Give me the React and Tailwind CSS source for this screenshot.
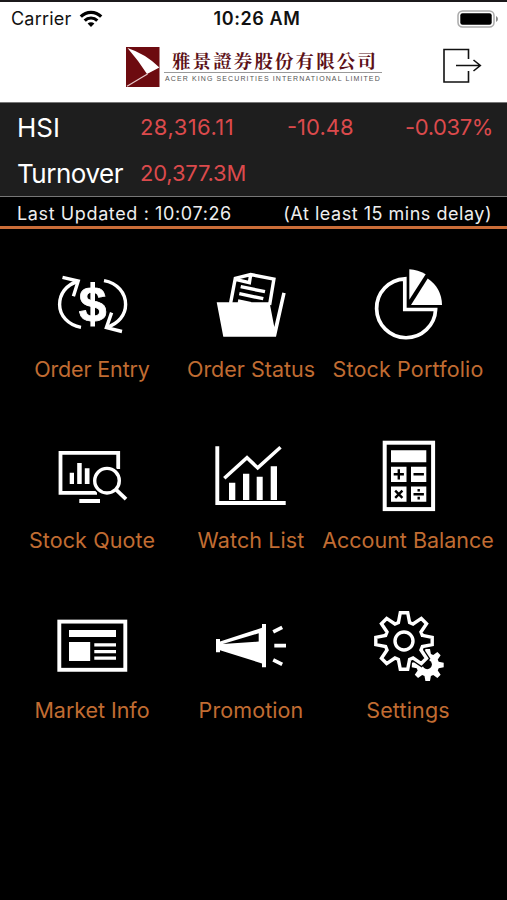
const Icon = ({ children }) => (
  <svg width="80" height="80" viewBox="0 0 80 80" fill="none" stroke="none" className="text-white">
    {children}
  </svg>
);

// closed outline of a gear with `teeth` teeth around (cx, cy)
function gearPath(cx, cy, teeth, root, tip, rootHalf, tipHalf) {
  const pts = [];
  for (let i = 0; i < teeth; i++) {
    const a = (i * 2 * Math.PI) / teeth;
    [[root, -rootHalf], [tip, -tipHalf], [tip, tipHalf], [root, rootHalf]].forEach(([r, h]) => {
      const x = cx + r * Math.cos(a) - h * Math.sin(a);
      const y = cy + r * Math.sin(a) + h * Math.cos(a);
      pts.push(`${x.toFixed(2)} ${y.toFixed(2)}`);
    });
  }
  return `M${pts.join('L')}Z`;
}

const OrderEntryIcon = () => (
  <Icon>
    <g stroke="currentColor" strokeWidth="3.4">
      <path d="M29 62.3C16 60 7.6 50.5 7.6 39.5C7.6 29 14 20 25.5 16.5" />
      <path d="M10.5 12.4L26.2 16L21.4 31.3" />
      <path d="M52 15.6C65.5 18 73.6 28 73.6 39.5C73.6 50 66.5 58.5 55 62.3" />
      <path d="M59.6 47.6L54.4 62.6L70 66.5" />
    </g>
    <text
      x="40.7"
      y="56"
      textAnchor="middle"
      fontSize="50"
      strokeWidth="0.8"
      className="fill-white stroke-white font-['Liberation_Sans',sans-serif] font-bold"
    >
      $
    </text>
    <path d="M40.7 17V61.5" stroke="currentColor" strokeWidth="4.6" />
  </Icon>
);

const OrderStatusIcon = () => (
  <Icon>
    <path
      d="M19.6 38L24.3 13.4L39.7 9.6L62.9 14L58.6 40M24.3 14.4L38.4 17.6L39.7 9.6"
      stroke="currentColor"
      strokeWidth="3.4"
    />
    <path d="M29.7 21.7L54 26.7M28.3 28.7L52.3 33.7M27 36L40 38.6" stroke="currentColor" strokeWidth="3.4" />
    <path d="M5.7 37.3H58.5L63.3 62L71.3 27.5L74.7 28.2L65 71.7H12.3Z" fill="currentColor" />
  </Icon>
);

const PortfolioIcon = () => (
  <Icon>
    <path d="M36.8 13.8V44.5H67.6A29.5 29.5 0 1 1 36.8 13.8Z" stroke="currentColor" strokeWidth="3.7" />
    <path d="M41.3 4.3Q50 4.6 57.7 9.3L41.3 34.7Z" fill="currentColor" />
    <path d="M59.7 13.6Q73.6 23 74 40H43Z" fill="currentColor" />
  </Icon>
);

const QuoteIcon = () => (
  <Icon>
    <path d="M66.2 33V16.9H8.5V56.8H45" stroke="currentColor" strokeWidth="3.8" />
    <path d="M17.7 36.7H22V48H17.7ZM25.2 27H29.7V48H25.2ZM32.8 32.3H37.5V48H32.8ZM27.3 63H48V67H27.3Z" fill="currentColor" />
    <circle cx="55" cy="44.7" r="12.3" stroke="black" strokeWidth="6.4" />
    <circle cx="55" cy="44.7" r="12.3" stroke="currentColor" strokeWidth="3.4" />
    <path d="M63.5 53.2L74 63.2" stroke="currentColor" strokeWidth="3.8" />
  </Icon>
);

const WatchIcon = () => (
  <Icon>
    <path d="M6.3 10.3V67H74.7" stroke="currentColor" strokeWidth="3.9" />
    <path d="M13.3 42.3L36 21.7L46.7 31.9L69.5 11.2" stroke="currentColor" strokeWidth="3.5" />
    <path d="M18 46.7H24.3V64H18ZM32 37.7H38.3V64H32ZM45.7 40.7H51.7V64H45.7ZM59.7 30.3H66V64H59.7Z" fill="currentColor" />
  </Icon>
);

const CalculatorIcon = () => (
  <Icon>
    <rect x="16.7" y="6.7" width="48.4" height="66.4" stroke="currentColor" strokeWidth="4" />
    <path
      d="M23 14.3H58.3V26.3H23ZM23 30.7H38.5V46H23ZM43 30.7H58.3V46H43ZM23 50.6H38.5V65.8H23ZM43 50.6H58.3V65.8H43Z"
      fill="currentColor"
    />
    <path
      d="M25.7 38.3H35.9M30.8 33.2V43.4M45.5 38.3H55.9M27.2 54.6L34.4 61.8M34.4 54.6L27.2 61.8M45.5 58.2H55.9M50.7 53V55.6M50.7 60.8V63.4"
      stroke="black"
      strokeWidth="2.4"
    />
  </Icon>
);

const MarketIcon = () => (
  <Icon>
    <rect x="7.3" y="15.6" width="66" height="48.2" stroke="currentColor" strokeWidth="3.9" />
    <path
      d="M17 24H64V31H17ZM17 36H38.2V55H17ZM42.3 37.3H64V40.6H42.3ZM42.3 44H64V47.2H42.3ZM42.3 50.6H64V53.8H42.3Z"
      fill="currentColor"
    />
  </Icon>
);

const PromotionIcon = () => (
  <Icon>
    <path
      fillRule="evenodd"
      d="M5 33H9V35.4L51 21.8V18H55V61.3H51V57.5L9 44.2V46.3H5ZM11.7 37.9L47.7 35.6V27.3Z"
      fill="currentColor"
    />
    <path d="M62.2 25.8L71.2 21.3M63.3 39.7H75M62.2 53.8L71.2 58.3" stroke="currentColor" strokeWidth="3.7" />
  </Icon>
);

const bigGear = gearPath(36, 35, 8, 18.4, 28.2, 5.6, 3.7);
const smallGear = gearPath(59.7, 59, 8, 11, 16, 3.2, 2.3);

const SettingsIcon = () => (
  <Icon>
    <path d={smallGear} fill="currentColor" />
    <circle cx="59.2" cy="58.5" r="4.7" fill="black" />
    <path d={bigGear} fill="black" stroke="black" strokeWidth="6" />
    <path d={bigGear} stroke="currentColor" strokeWidth="3.4" />
    <circle cx="36" cy="35" r="9" stroke="currentColor" strokeWidth="3.4" />
  </Icon>
);

const menu = [
  { label: 'Order Entry', icon: OrderEntryIcon, tracking: 'tracking-[-0.15px]' },
  { label: 'Order Status', icon: OrderStatusIcon, tracking: 'tracking-[0px]' },
  { label: 'Stock Portfolio', icon: PortfolioIcon, tracking: 'tracking-[0.15px]' },
  { label: 'Stock Quote', icon: QuoteIcon, tracking: 'tracking-[0.1px]' },
  { label: 'Watch List', icon: WatchIcon, tracking: 'tracking-[0.1px]' },
  { label: 'Account Balance', icon: CalculatorIcon, tracking: 'tracking-[0px]' },
  { label: 'Market Info', icon: MarketIcon, tracking: 'tracking-[-0.05px]' },
  { label: 'Promotion', icon: PromotionIcon, tracking: 'tracking-[0.1px]' },
  { label: 'Settings', icon: SettingsIcon, tracking: 'tracking-[0.15px]' },
];

function StatusBar() {
  return (
    <div className="grid h-[33px] grid-cols-3 items-center pl-[11px] pr-[8px] text-[18px] text-[#111]">
      <div className="flex items-center">
        <span className="tracking-[0.2px]">Carrier</span>
        <svg width="24" height="18" viewBox="0 0 24 18" className="ml-[8px]" fill="none" stroke="black" strokeWidth="3.2">
          <path d="M1.8 6.6C7.4 0.9 16.6 0.9 22.2 6.6" />
          <path d="M5.7 10.6C9.2 7.1 14.8 7.1 18.3 10.6" />
          <path d="M12 17L8.6 13.4C10.5 11.7 13.5 11.7 15.4 13.4Z" fill="black" stroke="none" />
        </svg>
      </div>
      <span className="pl-[4px] text-center font-semibold tracking-[0.6px] whitespace-nowrap">10:26 AM</span>
      <svg width="42" height="18" viewBox="0 0 42 18" className="justify-self-end" fill="none">
        <rect x="1" y="1" width="36" height="16" rx="4.5" stroke="#aaa" strokeWidth="1.5" />
        <rect x="3.3" y="3.3" width="31.4" height="11.4" rx="2.2" fill="black" />
        <path d="M39 6V12Q41 11 41 9T39 6Z" fill="#888" />
      </svg>
    </div>
  );
}

function Brand() {
  return (
    <div className="flex h-[67px] items-start justify-between pr-[25px] pl-[126px]">
      <div className="flex pt-[12px]">
        <svg width="34" height="40" viewBox="0 0 34 40">
          <rect width="33.5" height="40" fill="#6d0b10" />
          <path d="M1.5 1Q20 7 33.4 20.6L21 27Q12 13 1.5 1Z" fill="white" />
          <path d="M1 39.3L21.5 27" stroke="#e8caca" strokeWidth="1.2" />
        </svg>
        <div className="ml-[4px] flex w-[218px] flex-col pt-[2px]">
          <span className="pl-[8px] font-['Noto_Serif_CJK_TC','Noto_Sans_CJK_TC',serif] text-[18.5px] leading-[22px] font-bold tracking-[2.1px] whitespace-nowrap text-[#5c1118]">
            雅景證券股份有限公司
          </span>
          <span className="mt-px border-t border-[#999] pl-[1px] pt-[2px] font-['Liberation_Sans',sans-serif] text-[7px] leading-[8px] tracking-[1.11px] whitespace-nowrap text-[#555]">
            ACER KING SECURITIES INTERNATIONAL LIMITED
          </span>
        </div>
      </div>
      <button className="mt-[13px]">
        <svg width="39" height="36" viewBox="0 0 39 36" fill="none" stroke="#111" strokeWidth="1.6">
          <path d="M25.5 11V1.5H1V34H25.5V23" />
          <path d="M13 17.5H37M30.5 12L37.3 17.5L30.5 23" />
        </svg>
      </button>
    </div>
  );
}

function IndexSummary() {
  return (
    <div className="border-t border-b border-[#777] bg-[#1e1e1e] pl-[17px]">
      <div className="flex h-[48px] items-center">
        <span className="w-[123px] text-[26px] text-white">HSI</span>
        <span className="w-[147px] text-[22px] tracking-[0.45px] text-[#db4a4c]">28,316.11</span>
        <span className="w-[118px] text-[22px] text-[#db4a4c]">-10.48</span>
        <span className="text-[22px] tracking-[-0.4px] text-[#db4a4c]">-0.037%</span>
      </div>
      <div className="flex h-[45px] items-center">
        <span className="w-[123px] text-[26px] tracking-[-0.5px] text-white">Turnover</span>
        <span className="text-[22px] tracking-[-0.2px] text-[#db4a4c]">20,377.3M</span>
      </div>
    </div>
  );
}

export default function App() {
  return (
    <div className="h-[900px] w-[507px] overflow-hidden bg-black font-[Inter,sans-serif]">
      <header className="border-t-2 border-[#1b191b] bg-white">
        <StatusBar />
        <Brand />
      </header>
      <IndexSummary />
      <div className="flex h-[32px] items-center justify-between border-b-3 border-[#cb6d38] pt-[3px] pr-[15px] pl-[17px] text-[18px] text-[#eee]">
        <span className="tracking-[0.62px]">Last Updated : 10:07:26</span>
        <span className="tracking-[0.52px]">(At least 15 mins delay)</span>
      </div>
      <main className="grid grid-cols-[158px_160px_154px] auto-rows-[170.5px] pt-[36px] pl-[13px]">
        {menu.map(({ label, icon: MenuIcon, tracking }) => (
          <button key={label} className="flex flex-col items-center justify-start">
            <MenuIcon />
            <span className={`mt-[9px] text-[21.5px] leading-[30px] whitespace-nowrap text-[#c16c32] ${tracking}`}>
              {label}
            </span>
          </button>
        ))}
      </main>
    </div>
  );
}
